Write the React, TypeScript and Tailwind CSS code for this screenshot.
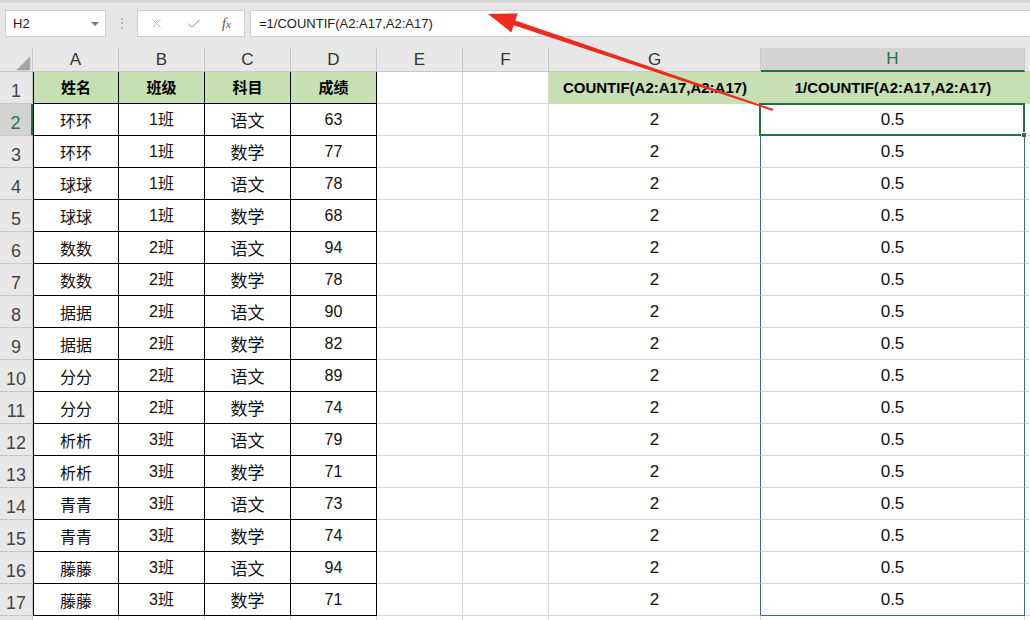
import { X, Check } from 'lucide-react'

const rows: [string, string, string, number][] = [
  ['环环', '1班', '语文', 63],
  ['环环', '1班', '数学', 77],
  ['球球', '1班', '语文', 78],
  ['球球', '1班', '数学', 68],
  ['数数', '2班', '语文', 94],
  ['数数', '2班', '数学', 78],
  ['据据', '2班', '语文', 90],
  ['据据', '2班', '数学', 82],
  ['分分', '2班', '语文', 89],
  ['分分', '2班', '数学', 74],
  ['析析', '3班', '语文', 79],
  ['析析', '3班', '数学', 71],
  ['青青', '3班', '语文', 73],
  ['青青', '3班', '数学', 74],
  ['藤藤', '3班', '语文', 94],
  ['藤藤', '3班', '数学', 71],
]

const font = "font-['Liberation_Sans','Noto_Sans_CJK_SC',sans-serif]"
const cjk = "font-['Noto_Sans_CJK_SC',sans-serif]"

function RowHead({ n, active }: { n?: number; active?: boolean }) {
  return (
    <div
      className={
        'w-[33px] shrink-0 h-full flex items-end justify-center text-[18px] leading-none border-b border-[#c8c8c8] ' +
        (active
          ? 'bg-[#d3d3d3] text-[#217346] border-r-2 border-r-[#217346]'
          : 'bg-[#e8e8e8] text-[#444] border-r border-r-[#c8c8c8]')
      }
    >
      <span className="pb-[3px]">{n}</span>
    </div>
  )
}

function Toolbar() {
  return (
    <div className="h-[48px] bg-[#e6e6e6] border-t-[3px] border-[#d8d8d8] flex items-start pt-[7px]">
      <div className="ml-[5px] w-[101px] h-[27px] bg-white border border-[#cfcfcf] flex items-center justify-between pl-[7px] pr-[6px] text-[13px] text-[#222]">
        <span>H2</span>
        <span className="w-0 h-0 border-l-[4px] border-r-[4px] border-t-[4px] border-l-transparent border-r-transparent border-t-[#777]" />
      </div>
      <div className="w-[31px] h-[27px] flex items-center justify-center text-[#aaa] text-[14px]">⋮</div>
      <div className="w-[108px] h-[27px] bg-white border border-[#cfcfcf] flex items-center text-[#b5b5b5]">
        <X size={15} strokeWidth={1.5} className="ml-[11px]" />
        <Check size={16} strokeWidth={1.6} className="ml-[22px]" />
        <span className="ml-[20px] text-[#555] italic text-[14px] font-['Liberation_Serif',serif]">
          f<span className="text-[11px]">x</span>
        </span>
      </div>
      <div className="ml-[5px] flex-1 h-[27px] bg-white border border-[#cfcfcf] border-r-0 flex items-center pl-[8px] text-[13px] text-[#222]">
        =1/COUNTIF(A2:A17,A2:A17)
      </div>
    </div>
  )
}

function ColumnHeaders() {
  const cols = [
    ['A', 'w-[86px]'],
    ['B', 'w-[86px]'],
    ['C', 'w-[86px]'],
    ['D', 'w-[86px]'],
    ['E', 'w-[86px]'],
    ['F', 'w-[86px]'],
    ['G', 'w-[212px]'],
  ]
  return (
    <div className="h-[24px] flex bg-[#e8e8e8] text-[17px] text-[#333]">
      <div className="w-[33px] shrink-0 border-r border-b border-[#c8c8c8] flex items-end justify-end pr-[2px] text-[#a3a3a3] text-[18px] leading-none font-['DejaVu_Sans',sans-serif]">
        ◢
      </div>
      {cols.map(([c, w]) => (
        <div key={c} className={w + ' shrink-0 flex items-center justify-center border-r border-b border-[#c8c8c8]'}>
          {c}
        </div>
      ))}
      <div className="w-[264px] shrink-0 flex items-center justify-center bg-[#d3d3d3] text-[#217346] border-r border-[#c8c8c8] border-b-2 border-b-[#217346]">
        H
      </div>
      <div className="flex-1 border-b border-[#c8c8c8]" />
    </div>
  )
}

export default function App() {
  const grid = 'border-[#d4d4d4]'
  const blue = 'border-r-[#3d63a8]'
  return (
    <div className={'relative w-[1030px] h-[620px] overflow-hidden bg-white ' + font}>
      <Toolbar />
      <ColumnHeaders />

      {/* row 1 */}
      <div className="h-[32px] flex">
        <RowHead n={1} />
        {['姓名', '班级', '科目', '成绩'].map((h, i) => (
          <div
            key={h}
            className={
              'w-[86px] shrink-0 bg-[#c6e0b4] flex items-center justify-center font-bold text-[15px] text-black border-r border-b border-black ' +
              cjk +
              (i === 0 ? ' border-l' : '')
            }
          >
            {h}
          </div>
        ))}
        <div className={'w-[86px] shrink-0 border-r border-b ' + grid} />
        <div className={'w-[86px] shrink-0 border-r border-b ' + grid} />
        <div className="w-[212px] shrink-0 bg-[#c6e0b4] flex items-center justify-center font-bold text-[15px] text-black">
          COUNTIF(A2:A17,A2:A17)
        </div>
        <div className="w-[264px] shrink-0 bg-[#c6e0b4] flex items-center justify-center font-bold text-[15px] text-black">
          1/COUNTIF(A2:A17,A2:A17)
        </div>
        <div className="flex-1 bg-[#c6e0b4]" />
      </div>

      {rows.map(([name, cls, subj, score], i) => {
        const r = i + 2
        const last = r === 17
        return (
          <div key={r} className="h-[32px] flex">
            <RowHead n={r} active={r === 2} />
            <div className={'w-[86px] shrink-0 flex items-center justify-center text-[16px] text-[#111] border-l border-r border-b border-black ' + cjk}>
              {name}
            </div>
            <div className="w-[86px] shrink-0 flex items-center justify-center text-[16px] text-[#111] border-r border-b border-black">
              {cls}
            </div>
            <div className={'w-[86px] shrink-0 flex items-center justify-center text-[17px] text-[#111] border-r border-b border-black ' + cjk}>
              {subj}
            </div>
            <div className="w-[86px] shrink-0 flex items-center justify-center text-[16px] text-[#111] border-r border-b border-black">
              {score}
            </div>
            <div className={'w-[86px] shrink-0 border-r border-b ' + grid} />
            <div className={'w-[86px] shrink-0 border-r border-b ' + grid} />
            <div className={'w-[212px] shrink-0 flex items-center justify-center text-[17px] text-[#111] border-r border-b ' + grid + ' ' + blue}>
              2
            </div>
            <div
              className={
                'relative w-[264px] shrink-0 flex items-center justify-center text-[17px] text-[#111] border-r border-b ' +
                grid +
                ' ' +
                blue +
                (last ? ' border-b-[#3d63a8]' : '')
              }
            >
              0.5
              {r === 2 && (
                <div className="absolute -left-[2px] -top-[1px] w-[266px] h-[33px] border-2 border-[#217346]">
                  <div className="absolute -right-[4px] -bottom-[4px] w-[6px] h-[6px] bg-[#217346] border border-white" />
                </div>
              )}
            </div>
            <div className={'flex-1 border-b ' + grid} />
          </div>
        )
      })}

      {/* row 18, only its top edge shows */}
      <div className="h-[32px] flex">
        <RowHead />
        <div className={'w-[86px] shrink-0 border-r ' + grid} />
        <div className={'w-[86px] shrink-0 border-r ' + grid} />
        <div className={'w-[86px] shrink-0 border-r ' + grid} />
        <div className={'w-[86px] shrink-0 border-r ' + grid} />
        <div className={'w-[86px] shrink-0 border-r ' + grid} />
        <div className={'w-[86px] shrink-0 border-r ' + grid} />
        <div className={'w-[212px] shrink-0 border-r ' + grid} />
        <div className={'w-[264px] shrink-0 border-r ' + grid} />
      </div>

      <svg className="absolute left-0 top-0 pointer-events-none" width={1030} height={620}>
        <polygon
          points="488,14 517.7,13.4 515.3,20.5 773.3,109.1 772.7,111 513.7,25.3 511.3,32.4"
          fill="#ee2a1e"
        />
      </svg>
    </div>
  )
}
